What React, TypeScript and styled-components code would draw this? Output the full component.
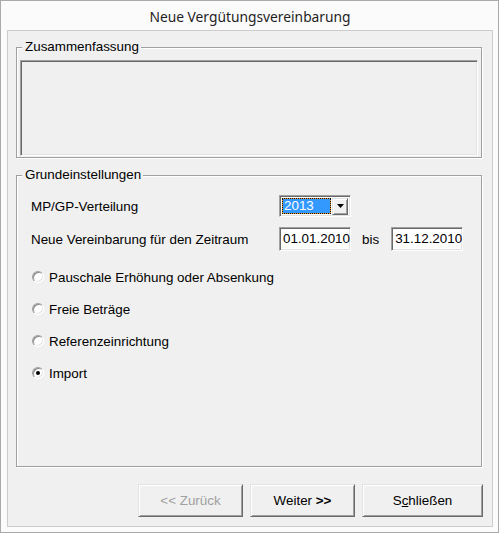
import React from "react";
import styled, { createGlobalStyle } from "styled-components";

const Global = createGlobalStyle`
  html, body { margin: 0; padding: 0; background: #fbfbfb; }
  body { font-family: "Liberation Sans", Arial, sans-serif; font-size: 13.4px; color: #000; }
  * { box-sizing: border-box; }
`;

const Window = styled.div`
  width: 499px;
  height: 533px;
  border: 1px solid #aaaaaa;
  background: #fbfbfb;
  display: flex;
  flex-direction: column;
  padding: 0 5px 5px 6px;
`;

const TitleBar = styled.div`
  height: 29px;
  flex: none;
  display: flex;
  align-items: center;
  justify-content: center;
  font-family: "Noto Sans", "Open Sans", sans-serif;
  font-size: 13.8px;
  color: #1e1e1e;
  padding-top: 1px;
`;

const Client = styled.div`
  flex: 1;
  border: 1px solid #cccccc;
  background: #f0f0f0;
  display: flex;
  flex-direction: column;
  padding: 16px 10px 9px 8px;
  gap: 17px;
`;

const Group = styled.section<{ $grow?: boolean }>`
  position: relative;
  border: 1px solid #a0a0a0;
  box-shadow: inset 1px 1px 0 #ffffff, 1px 1px 0 #ffffff;
  flex: ${(p) => (p.$grow ? "1" : "none")};
`;

const Legend = styled.span`
  position: absolute;
  top: -8px;
  left: 5px;
  padding: 0 2px 0 3px;
  line-height: 14px;
  height: 14px;
  background: #f0f0f0;
  white-space: nowrap;
`;

const SummaryBody = styled.div`
  padding: 12px 3px 1px 3px;
`;

const SummaryBox = styled.div`
  height: 96px;
  border: 1px solid;
  border-color: #a0a0a0 #ffffff #ffffff #a0a0a0;
  box-shadow: inset 1px 1px 0 #696969, inset -1px -1px 0 #e3e3e3;
  background: #f0f0f0;
`;

const SettingsBody = styled.div`
  padding: 19px 10px 0 14px;
  display: flex;
  flex-direction: column;
`;

const FormGrid = styled.div`
  display: grid;
  grid-template-columns: 248px auto;
  grid-template-rows: 22px 24px;
  row-gap: 10px;
  align-items: center;
`;

const Label = styled.div`
  white-space: nowrap;
  padding-top: 1px;
`;

const Controls = styled.div`
  display: flex;
  align-items: center;
  height: 100%;
`;

const Combo = styled.div`
  width: 72px;
  height: 22px;
  border: 1px solid;
  border-color: #a0a0a0 #ffffff #ffffff #a0a0a0;
  box-shadow: inset 1px 1px 0 #696969, inset -1px -1px 0 #e3e3e3;
  background: #ffffff;
  display: flex;
  align-items: center;
  padding: 2px 2px 2px 2px;
  gap: 1px;
`;

const ComboValue = styled.div`
  width: 50px;
  height: 16px;
  border: 1px dotted #111;
  background: linear-gradient(#3399ff, #3399ff) padding-box,
    linear-gradient(#e89a2a, #e89a2a) border-box;
  color: #ffffff;
  line-height: 14px;
  padding-left: 1px;
`;

const ComboButton = styled.div`
  width: 16px;
  height: 17px;
  background: #f0f0f0;
  border: 1px solid;
  border-color: #e3e3e3 #696969 #696969 #e3e3e3;
  box-shadow: inset 1px 1px 0 #ffffff, inset -1px -1px 0 #a0a0a0;
  display: flex;
  align-items: center;
  justify-content: center;
`;

const Field = styled.div`
  width: 72px;
  height: 24px;
  border: 1px solid;
  border-color: #a0a0a0 #ffffff #ffffff #a0a0a0;
  box-shadow: inset 1px 1px 0 #696969, inset -1px -1px 0 #e3e3e3;
  background: #ffffff;
  line-height: 22px;
  padding-left: 3px;
  white-space: nowrap;
  overflow: hidden;
`;

const Bis = styled.span`
  padding: 0 12px 0 11px;
`;

const RadioList = styled.div`
  margin-top: 10px;
  display: flex;
  flex-direction: column;
`;

const RadioRow = styled.div`
  height: 32px;
  display: flex;
  align-items: center;
  gap: 5px;
  padding-left: 1px;
`;

const RadioDot = styled.span<{ $checked?: boolean }>`
  position: relative;
  width: 12px;
  height: 12px;
  flex: none;
  border-radius: 50%;
  background: #ffffff;
  border: 1px solid;
  border-color: #a0a0a0 #ffffff #ffffff #a0a0a0;
  box-shadow: inset 1px 1px 0 #8a8a8a, inset -1px -1px 0 #e3e3e3;
  &::after {
    content: "";
    display: ${(p) => (p.$checked ? "block" : "none")};
    position: absolute;
    left: 3px;
    top: 3px;
    width: 4px;
    height: 4px;
    border-radius: 50%;
    background: #000;
  }
`;

const ButtonRow = styled.div`
  flex: none;
  display: flex;
  justify-content: flex-end;
  gap: 7px;
  margin-right: -1px;
`;

const Button = styled.button<{ $w: number }>`
  width: ${(p) => p.$w}px;
  height: 33px;
  font-family: "Liberation Sans", Arial, sans-serif;
  font-size: 13.4px;
  color: ${(p) => (p.disabled ? "#a0a0a0" : "#000")};
  background: #f0f0f0;
  border: 1px solid;
  border-color: #e3e3e3 #696969 #696969 #e3e3e3;
  box-shadow: inset 1px 1px 0 #ffffff, inset -1px -1px 0 #a0a0a0;
  padding: 0;
  border-radius: 0;
  cursor: default;
`;

const Strong = styled.b`
  font-weight: bold;
`;

const Arrow = () => (
  <svg width="7" height="4" viewBox="0 0 7 4">
    <polygon points="0,0 7,0 3.5,4" fill="#000" />
  </svg>
);

const options = [
  { label: "Pauschale Erhöhung oder Absenkung", checked: false },
  { label: "Freie Beträge", checked: false },
  { label: "Referenzeinrichtung", checked: false },
  { label: "Import", checked: true },
];

export default function App() {
  return (
    <>
      <Global />
      <Window>
        <TitleBar>Neue Vergütungsvereinbarung</TitleBar>
        <Client>
          <Group>
            <Legend>Zusammenfassung</Legend>
            <SummaryBody>
              <SummaryBox />
            </SummaryBody>
          </Group>
          <Group $grow>
            <Legend>Grundeinstellungen</Legend>
            <SettingsBody>
              <FormGrid>
                <Label>MP/GP-Verteilung</Label>
                <Controls>
                  <Combo>
                    <ComboValue>2013</ComboValue>
                    <ComboButton>
                      <Arrow />
                    </ComboButton>
                  </Combo>
                </Controls>
                <Label>Neue Vereinbarung für den Zeitraum</Label>
                <Controls>
                  <Field>01.01.2010</Field>
                  <Bis>bis</Bis>
                  <Field>31.12.2010</Field>
                </Controls>
              </FormGrid>
              <RadioList>
                {options.map((o) => (
                  <RadioRow key={o.label}>
                    <RadioDot $checked={o.checked} />
                    <span>{o.label}</span>
                  </RadioRow>
                ))}
              </RadioList>
            </SettingsBody>
          </Group>
          <ButtonRow>
            <Button $w={105} disabled>
              {"<< Zurück"}
            </Button>
            <Button $w={105}>
              Weiter <Strong>{">>"}</Strong>
            </Button>
            <Button $w={121}>
              S<u>c</u>hließen
            </Button>
          </ButtonRow>
        </Client>
      </Window>
    </>
  );
}
